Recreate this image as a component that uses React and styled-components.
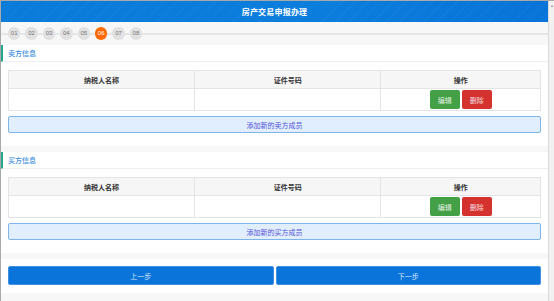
import React from 'react';
import styled, { createGlobalStyle } from 'styled-components';

const GlobalStyle = createGlobalStyle`
  html, body {
    margin: 0;
    padding: 0;
    background: #fff;
  }
  body {
    font-family: "Noto Sans CJK SC", "Noto Sans", sans-serif;
  }
`;

const steps = ['01', '02', '03', '04', '05', '06', '07', '08'];

const Section = ({ title, addText, first }) => (
  <Card $first={first}>
    <CardTitle>{title}</CardTitle>
    <CardBody>
      <Table>
        <colgroup>
          <col style={{ width: '35%' }} />
          <col style={{ width: '35%' }} />
          <col style={{ width: '30%' }} />
        </colgroup>
        <thead>
          <tr>
            <Th>纳税人名称</Th>
            <Th>证件号码</Th>
            <Th>操作</Th>
          </tr>
        </thead>
        <tbody>
          <tr>
            <Td />
            <Td />
            <Td>
              <ActionGroup>
                <ActionBtn $kind="edit">编辑</ActionBtn>
                <ActionBtn $kind="delete">删除</ActionBtn>
              </ActionGroup>
            </Td>
          </tr>
        </tbody>
      </Table>
      <AddButton>{addText}</AddButton>
    </CardBody>
  </Card>
);

const App = () => {
  return (
    <>
      <GlobalStyle />
      <Frame>
        <Main>
          <Header>房产交易申报办理</Header>
          <Steps>
            {steps.map((s) => (
              <Step key={s} $active={s === '06'}>
                {s}
              </Step>
            ))}
          </Steps>
          <Section first title="卖方信息" addText="添加新的卖方成员" />
          <Section title="买方信息" addText="添加新的买方成员" />
          <Footer>
            <NavButton>上一步</NavButton>
            <NavButton>下一步</NavButton>
          </Footer>
        </Main>
        <Scrollbar>
          <ScrollArrow />
        </Scrollbar>
      </Frame>
    </>
  );
};

export default App;

const Frame = styled.div`
  display: flex;
  width: 554px;
  height: 301px;
  box-sizing: border-box;
  border-top: 1px solid #a9a9a9;
  overflow: hidden;
`;

const Main = styled.div`
  flex: 1;
  display: flex;
  flex-direction: column;
  border-left: 1px solid #a9a9a9;
  background: #f7f7f7;
`;

const Header = styled.div`
  display: flex;
  align-items: center;
  justify-content: center;
  height: 21px;
  background: repeating-linear-gradient(
      135deg,
      rgba(255, 255, 255, 0) 0 7px,
      rgba(255, 255, 255, 0.018) 7px 9px
    ),
    linear-gradient(90deg, #0a7bd9 0%, #0b7ddc 60%, #0873d8 100%);
  color: #fff;
  font-size: 8px;
  font-weight: bold;
  letter-spacing: 0.2px;
`;

const Steps = styled.div`
  position: relative;
  display: flex;
  align-items: center;
  gap: 5px;
  height: 23px;
  padding: 0 0 0 7px;
  background: #f7f7f7;

  &::before {
    content: '';
    position: absolute;
    left: 0;
    right: 0;
    top: 11px;
    height: 2px;
    background: #e6e6e6;
  }
`;

const Step = styled.div`
  position: relative;
  display: flex;
  align-items: center;
  justify-content: center;
  width: 12.4px;
  height: 12.4px;
  border-radius: 50%;
  background: ${(p) => (p.$active ? '#ff6a00' : '#e1e1e1')};
  color: ${(p) => (p.$active ? '#fff' : '#777')};
  font-size: 6px;
  font-family: "Liberation Sans", sans-serif;
`;

const Card = styled.div`
  background: #fff;
  margin-top: ${(p) => (p.$first ? '0' : '6px')};
`;

const CardTitle = styled.div`
  display: flex;
  align-items: center;
  height: 16px;
  padding-left: 5px;
  border-left: 2px solid #26a68c;
  border-bottom: 1px solid #eeeeee;
  color: #3a8ee0;
  font-size: 7px;
  font-weight: 500;
`;

const CardBody = styled.div`
  padding: 8px 7px 13px 7px;
`;

const Table = styled.table`
  width: 100%;
  border-collapse: collapse;
  table-layout: fixed;
  font-size: 7px;
`;

const Th = styled.th`
  height: 17px;
  padding: 0;
  background: #f6f6f6;
  border: 1px solid #e4e4e4;
  color: #333;
  font-weight: bold;
  text-align: center;
`;

const Td = styled.td`
  height: 21px;
  padding: 0;
  border: 1px solid #e4e4e4;
  text-align: center;
`;

const ActionGroup = styled.div`
  display: flex;
  justify-content: center;
  gap: 2px;
`;

const ActionBtn = styled.button`
  width: 30px;
  height: 19px;
  padding: 0;
  border: none;
  border-radius: 2px;
  background: ${(p) => (p.$kind === 'edit' ? '#43a047' : '#d3322f')};
  color: rgba(255, 255, 255, 0.85);
  font-family: inherit;
  font-size: 7px;
`;

const AddButton = styled.button`
  display: block;
  width: 100%;
  height: 17px;
  margin-top: 5px;
  padding: 0;
  box-sizing: border-box;
  border: 1px solid #7fb3ec;
  border-radius: 2px;
  background: #e0eefd;
  color: #5553d8;
  font-family: inherit;
  font-size: 7px;
`;

const Footer = styled.div`
  display: flex;
  gap: 2px;
  margin-top: 6px;
  padding: 7px 7px 8px 7px;
  background: #fff;
`;

const NavButton = styled.button`
  flex: 1;
  height: 19px;
  padding: 0;
  border: 1px solid #3f8fe2;
  border-radius: 2px;
  background: #0a74db;
  color: #d2e6fa;
  font-family: inherit;
  font-size: 7px;
`;

const Scrollbar = styled.div`
  position: relative;
  width: 5px;
  background: #f1f1f1;
  border-left: 1px solid #dcdcdc;
`;

const ScrollArrow = styled.div`
  margin: 4px auto 0 auto;
  width: 0;
  height: 0;
  border-left: 1.5px solid transparent;
  border-right: 1.5px solid transparent;
  border-bottom: 2px solid #888;
`;
